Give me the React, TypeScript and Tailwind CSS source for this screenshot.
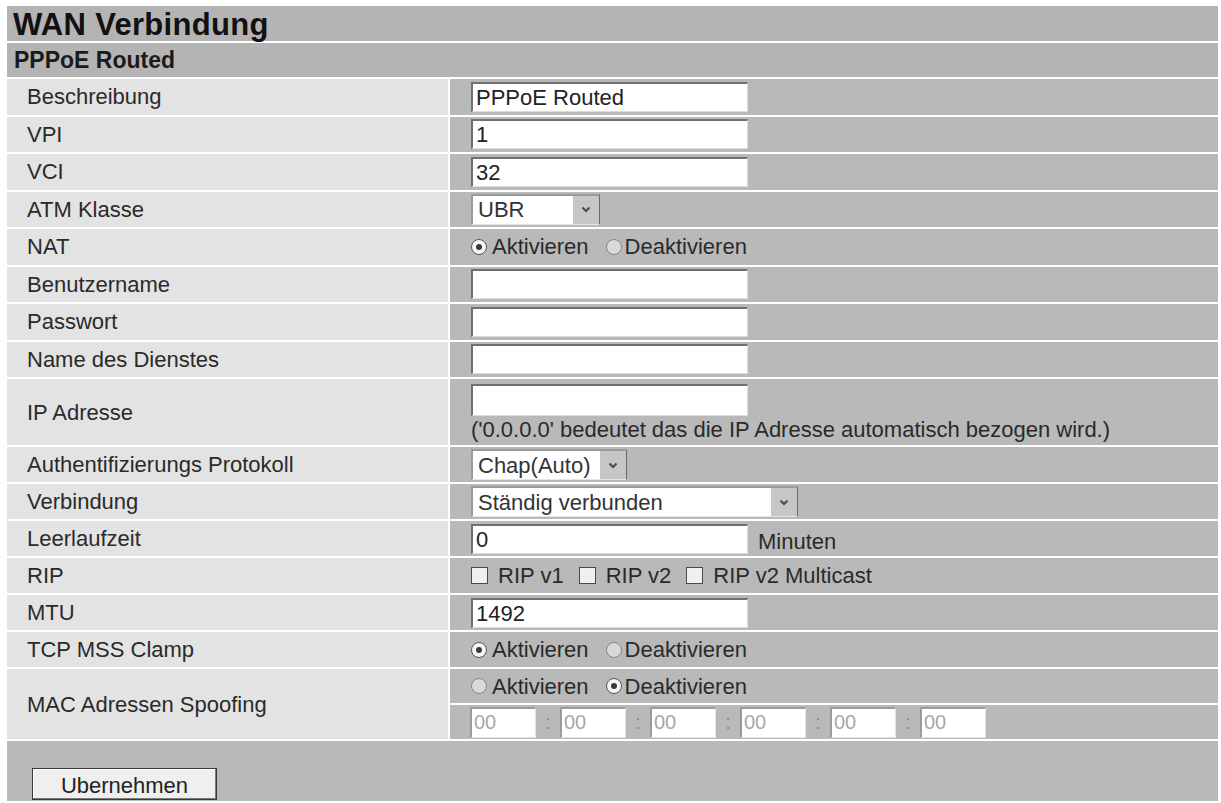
import React from "react";

const inputCls =
  "h-[30px] bg-white border-t-2 border-l-2 border-b border-r border-t-[#707070] border-l-[#707070] border-b-[#dcdcdc] border-r-[#dcdcdc] px-[3px] text-[22px] text-[#222] outline-none";

function Chevron() {
  return (
    <svg width="10" height="7" viewBox="0 0 10 7">
      <polyline points="1.5,1.5 5,5 8.5,1.5" fill="none" stroke="#4a4a4a" strokeWidth="2" />
    </svg>
  );
}

function Select({ value, width }: { value: string; width: string }) {
  return (
    <div
      className={`flex h-[31px] ${width} items-stretch border-t-2 border-l-2 border-b border-r border-t-[#9a9a9a] border-l-[#9a9a9a] border-b-[#e6e6e6] border-r-[#6a6a6a] bg-white`}
    >
      <span className="flex flex-1 items-center pl-[5px] text-[22px] text-[#333]">{value}</span>
      <span className="flex w-[26px] items-center justify-center bg-[#c6c6c6]">
        <Chevron />
      </span>
    </div>
  );
}

function Radio({ checked }: { checked?: boolean }) {
  return (
    <span
      className={`flex h-[16px] w-[16px] shrink-0 items-center justify-center rounded-full border ${
        checked ? "border-[#555] bg-[#f6f6f6]" : "border-[#858585] bg-[#d9d9d9]"
      }`}
    >
      {checked && <span className="h-[6px] w-[6px] rounded-full bg-[#3a3a3a]" />}
    </span>
  );
}

function RadioPair({ first }: { first: boolean }) {
  return (
    <div className="flex items-center text-[22px] text-[#2a2a2a]">
      <Radio checked={first} />
      <span className="ml-[5px]">Aktivieren</span>
      <span className="ml-[17px] flex items-center">
        <Radio checked={!first} />
      </span>
      <span className="ml-[3px]">Deaktivieren</span>
    </div>
  );
}

function Check({ label }: { label: string }) {
  return (
    <div className="flex items-center">
      <span className="h-[17px] w-[17px] border-[1.5px] border-[#4a4a4a] bg-[#f0f0f0]" />
      <span className="ml-[10px]">{label}</span>
    </div>
  );
}

function Row({ label, h, children }: { label: string; h: string; children?: React.ReactNode }) {
  return (
    <div className={`grid ${h} grid-cols-[441px_1fr] gap-x-[2px]`}>
      <div className="flex items-center bg-[#e3e3e3] pl-[20px] text-[22px] text-[#2a2a2a]">{label}</div>
      <div className="flex items-center bg-[#b9b9b9] pl-[21px] text-[22px] text-[#2a2a2a]">{children}</div>
    </div>
  );
}

export default function App() {
  const mac = ["00", "00", "00", "00", "00", "00"];
  return (
    <div className="min-h-screen bg-white font-['Liberation_Sans',Arial,sans-serif]">
      <div className="ml-[7px] flex w-[1211px] flex-col gap-[2px] pt-[6px]">
        <div className="flex h-[35px] items-center bg-[#b4b4b4] pl-[6px] pt-[3px] text-[31px] font-bold tracking-[0.3px] text-[#111]">
          WAN Verbindung
        </div>
        <div className="flex h-[34px] items-center bg-[#b4b4b4] pl-[7px] text-[23px] font-bold text-[#1a1a1a]">
          PPPoE Routed
        </div>

        <Row label="Beschreibung" h="h-[35.5px]">
          <input className={`${inputCls} w-[277px]`} defaultValue="PPPoE Routed" />
        </Row>
        <Row label="VPI" h="h-[35.5px]">
          <input className={`${inputCls} w-[277px]`} defaultValue="1" />
        </Row>
        <Row label="VCI" h="h-[35.5px]">
          <input className={`${inputCls} w-[277px]`} defaultValue="32" />
        </Row>
        <Row label="ATM Klasse" h="h-[35.5px]">
          <Select value="UBR" width="w-[129px]" />
        </Row>
        <Row label="NAT" h="h-[35.5px]">
          <RadioPair first />
        </Row>
        <Row label="Benutzername" h="h-[35.5px]">
          <input className={`${inputCls} w-[277px]`} />
        </Row>
        <Row label="Passwort" h="h-[35.5px]">
          <input className={`${inputCls} w-[277px]`} type="password" />
        </Row>
        <Row label="Name des Dienstes" h="h-[35.5px]">
          <input className={`${inputCls} w-[277px]`} />
        </Row>

        <div className="grid h-[66px] grid-cols-[441px_1fr] gap-x-[2px]">
          <div className="flex items-center bg-[#e3e3e3] pl-[20px] text-[22px] text-[#2a2a2a]">IP Adresse</div>
          <div className="flex flex-col bg-[#b9b9b9] pl-[21px] pt-[5px] text-[22px] text-[#2a2a2a]">
            <input className={`${inputCls} h-[32px] w-[277px]`} />
            <span className="leading-[27px]">('0.0.0.0' bedeutet das die IP Adresse automatisch bezogen wird.)</span>
          </div>
        </div>

        <Row label="Authentifizierungs Protokoll" h="h-[35px]">
          <Select value="Chap(Auto)" width="w-[156px]" />
        </Row>
        <Row label="Verbindung" h="h-[35px]">
          <Select value="Ständig verbunden" width="w-[327px]" />
        </Row>
        <Row label="Leerlaufzeit" h="h-[35px]">
          <input className={`${inputCls} w-[277px]`} defaultValue="0" />
          <span className="ml-[10px] self-end leading-[28px]">Minuten</span>
        </Row>
        <Row label="RIP" h="h-[35px]">
          <div className="flex items-center gap-[15px]">
            <Check label="RIP v1" />
            <Check label="RIP v2" />
            <Check label="RIP v2 Multicast" />
          </div>
        </Row>
        <Row label="MTU" h="h-[35px]">
          <input className={`${inputCls} w-[277px]`} defaultValue="1492" />
        </Row>
        <Row label="TCP MSS Clamp" h="h-[35px]">
          <RadioPair first />
        </Row>

        <div className="grid h-[70px] grid-cols-[441px_1fr] gap-x-[2px]">
          <div className="flex items-center bg-[#e3e3e3] pl-[20px] text-[22px] text-[#2a2a2a]">MAC Adressen Spoofing</div>
          <div className="flex flex-col gap-[2px]">
            <div className="flex flex-1 items-center bg-[#b9b9b9] pl-[21px]">
              <RadioPair first={false} />
            </div>
            <div className="flex flex-1 items-center bg-[#b9b9b9] pl-[20px]">
              {mac.map((m, i) => (
                <React.Fragment key={i}>
                  {i > 0 && <span className="w-[24px] text-center text-[20px] text-[#8a8a8a]">:</span>}
                  <input
                    disabled
                    className="h-[31px] w-[66px] border-t-2 border-l-2 border-b border-r border-t-[#9a9a9a] border-l-[#9a9a9a] border-b-[#e4e4e4] border-r-[#e4e4e4] bg-white px-[2px] text-[20px] text-[#a8a8a8]"
                    defaultValue={m}
                  />
                </React.Fragment>
              ))}
            </div>
          </div>
        </div>

        <div className="flex h-[60px] items-end bg-[#b9b9b9] pb-[1px] pl-[25px]">
          <button className="h-[32px] w-[185px] border border-[#3a3a3a] bg-[#efefef] text-[22px] text-[#222] shadow-[inset_-1px_-1px_0_#7a7a7a,inset_1px_1px_0_#ffffff]">
            Ubernehmen
          </button>
        </div>
      </div>
    </div>
  );
}
